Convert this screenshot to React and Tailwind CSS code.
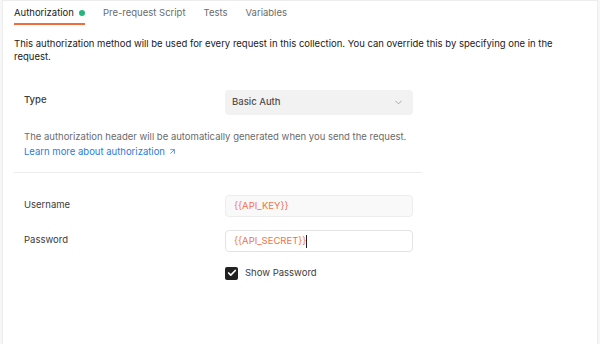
import React, { useState } from "react";
import { ChevronDown, ArrowUpRight, Check } from "lucide-react";

const tabs = ["Authorization", "Pre-request Script", "Tests", "Variables"];

export default function App() {
  const [showPassword, setShowPassword] = useState(true);

  return (
    <div
      className="w-[600px] h-[344px] bg-[#f7f7f7] px-[2px] overflow-hidden text-[9.5px] text-[#212121]"
      style={{ fontFamily: "Inter, 'Noto Sans', sans-serif" }}
    >
      <div className="h-full bg-white border-x border-t border-[#ededed] pl-[11px] pr-[30px]">
        {/* Tabs */}
        <div className="flex gap-[18px] pt-[2px]">
          {tabs.map((t, i) => (
            <div key={t} className="flex flex-col">
              <div
                className={
                  i === 0
                    ? "flex items-center gap-[5px] leading-[20px] text-[#212121]"
                    : "flex items-center leading-[20px] text-[#6b6b6b]"
                }
              >
                {t}
                {i === 0 && (
                  <span className="w-[6px] h-[6px] rounded-full bg-[#26b47f]" />
                )}
              </div>
              <div
                className={
                  i === 0 ? "h-[2px] bg-[#f26b3a]" : "h-[2px] bg-transparent"
                }
              />
            </div>
          ))}
        </div>

        {/* Description */}
        <p className="mt-[12px] leading-[13px] text-[#212121]">
          This authorization method will be used for every request in this
          collection. You can override this by specifying one in the request.
        </p>

        {/* Type section */}
        <div className="w-[408px] mt-[27px]">
          <div className="flex pl-[10px]">
            <div className="w-[201px] pt-[3px] font-medium text-[#3b3b3b]">
              Type
            </div>
            <button className="w-[188px] h-[25px] rounded-[4px] bg-[#f2f2f2] flex items-center justify-between pl-[7px] pr-[9px] font-medium text-[#4f4f4f]">
              Basic Auth
              <ChevronDown size={11} strokeWidth={1.5} className="text-[#8a8a8a]" />
            </button>
          </div>

          <div className="pl-[10px] mt-[14px] leading-[15px]">
            <p className="text-[#6b6b6b]">
              The authorization header will be automatically generated when you
              send the request.
            </p>
            <a href="#" className="inline-flex items-center gap-[3px] text-[#2a7bde]">
              Learn more about authorization
              <ArrowUpRight size={9} strokeWidth={2} />
            </a>
          </div>

          <div className="mt-[13px] h-px bg-[#ededed]" />

          {/* Credentials */}
          <div className="pl-[10px] mt-[22px] flex flex-col gap-[13px]">
            <div className="flex">
              <div className="w-[201px] pt-[3px] text-[#3b3b3b]">Username</div>
              <div className="w-[188px] h-[22px] rounded-[4px] border border-[#ededed] bg-[#f9f9f9] flex items-center pl-[8px] text-[#f2714a]">
                {"{{API_KEY}}"}
              </div>
            </div>
            <div className="flex">
              <div className="w-[201px] pt-[3px] text-[#3b3b3b]">Password</div>
              <div className="w-[188px] h-[22px] rounded-[4px] border border-[#e3e3e3] bg-white flex items-center pl-[8px] text-[#f2714a]">
                {"{{API_SECRET}}"}
                <span className="w-px h-[13px] bg-[#212121]" />
              </div>
            </div>
          </div>

          <div className="pl-[211px] mt-[14px]">
            <label className="flex items-center gap-[7px] text-[#3b3b3b] cursor-pointer">
              <span
                onClick={() => setShowPassword(!showPassword)}
                className="w-[13px] h-[13px] rounded-[2px] bg-[#212121] flex items-center justify-center"
              >
                {showPassword && (
                  <Check size={10} strokeWidth={4} className="text-white" />
                )}
              </span>
              Show Password
            </label>
          </div>
        </div>
      </div>
    </div>
  );
}
